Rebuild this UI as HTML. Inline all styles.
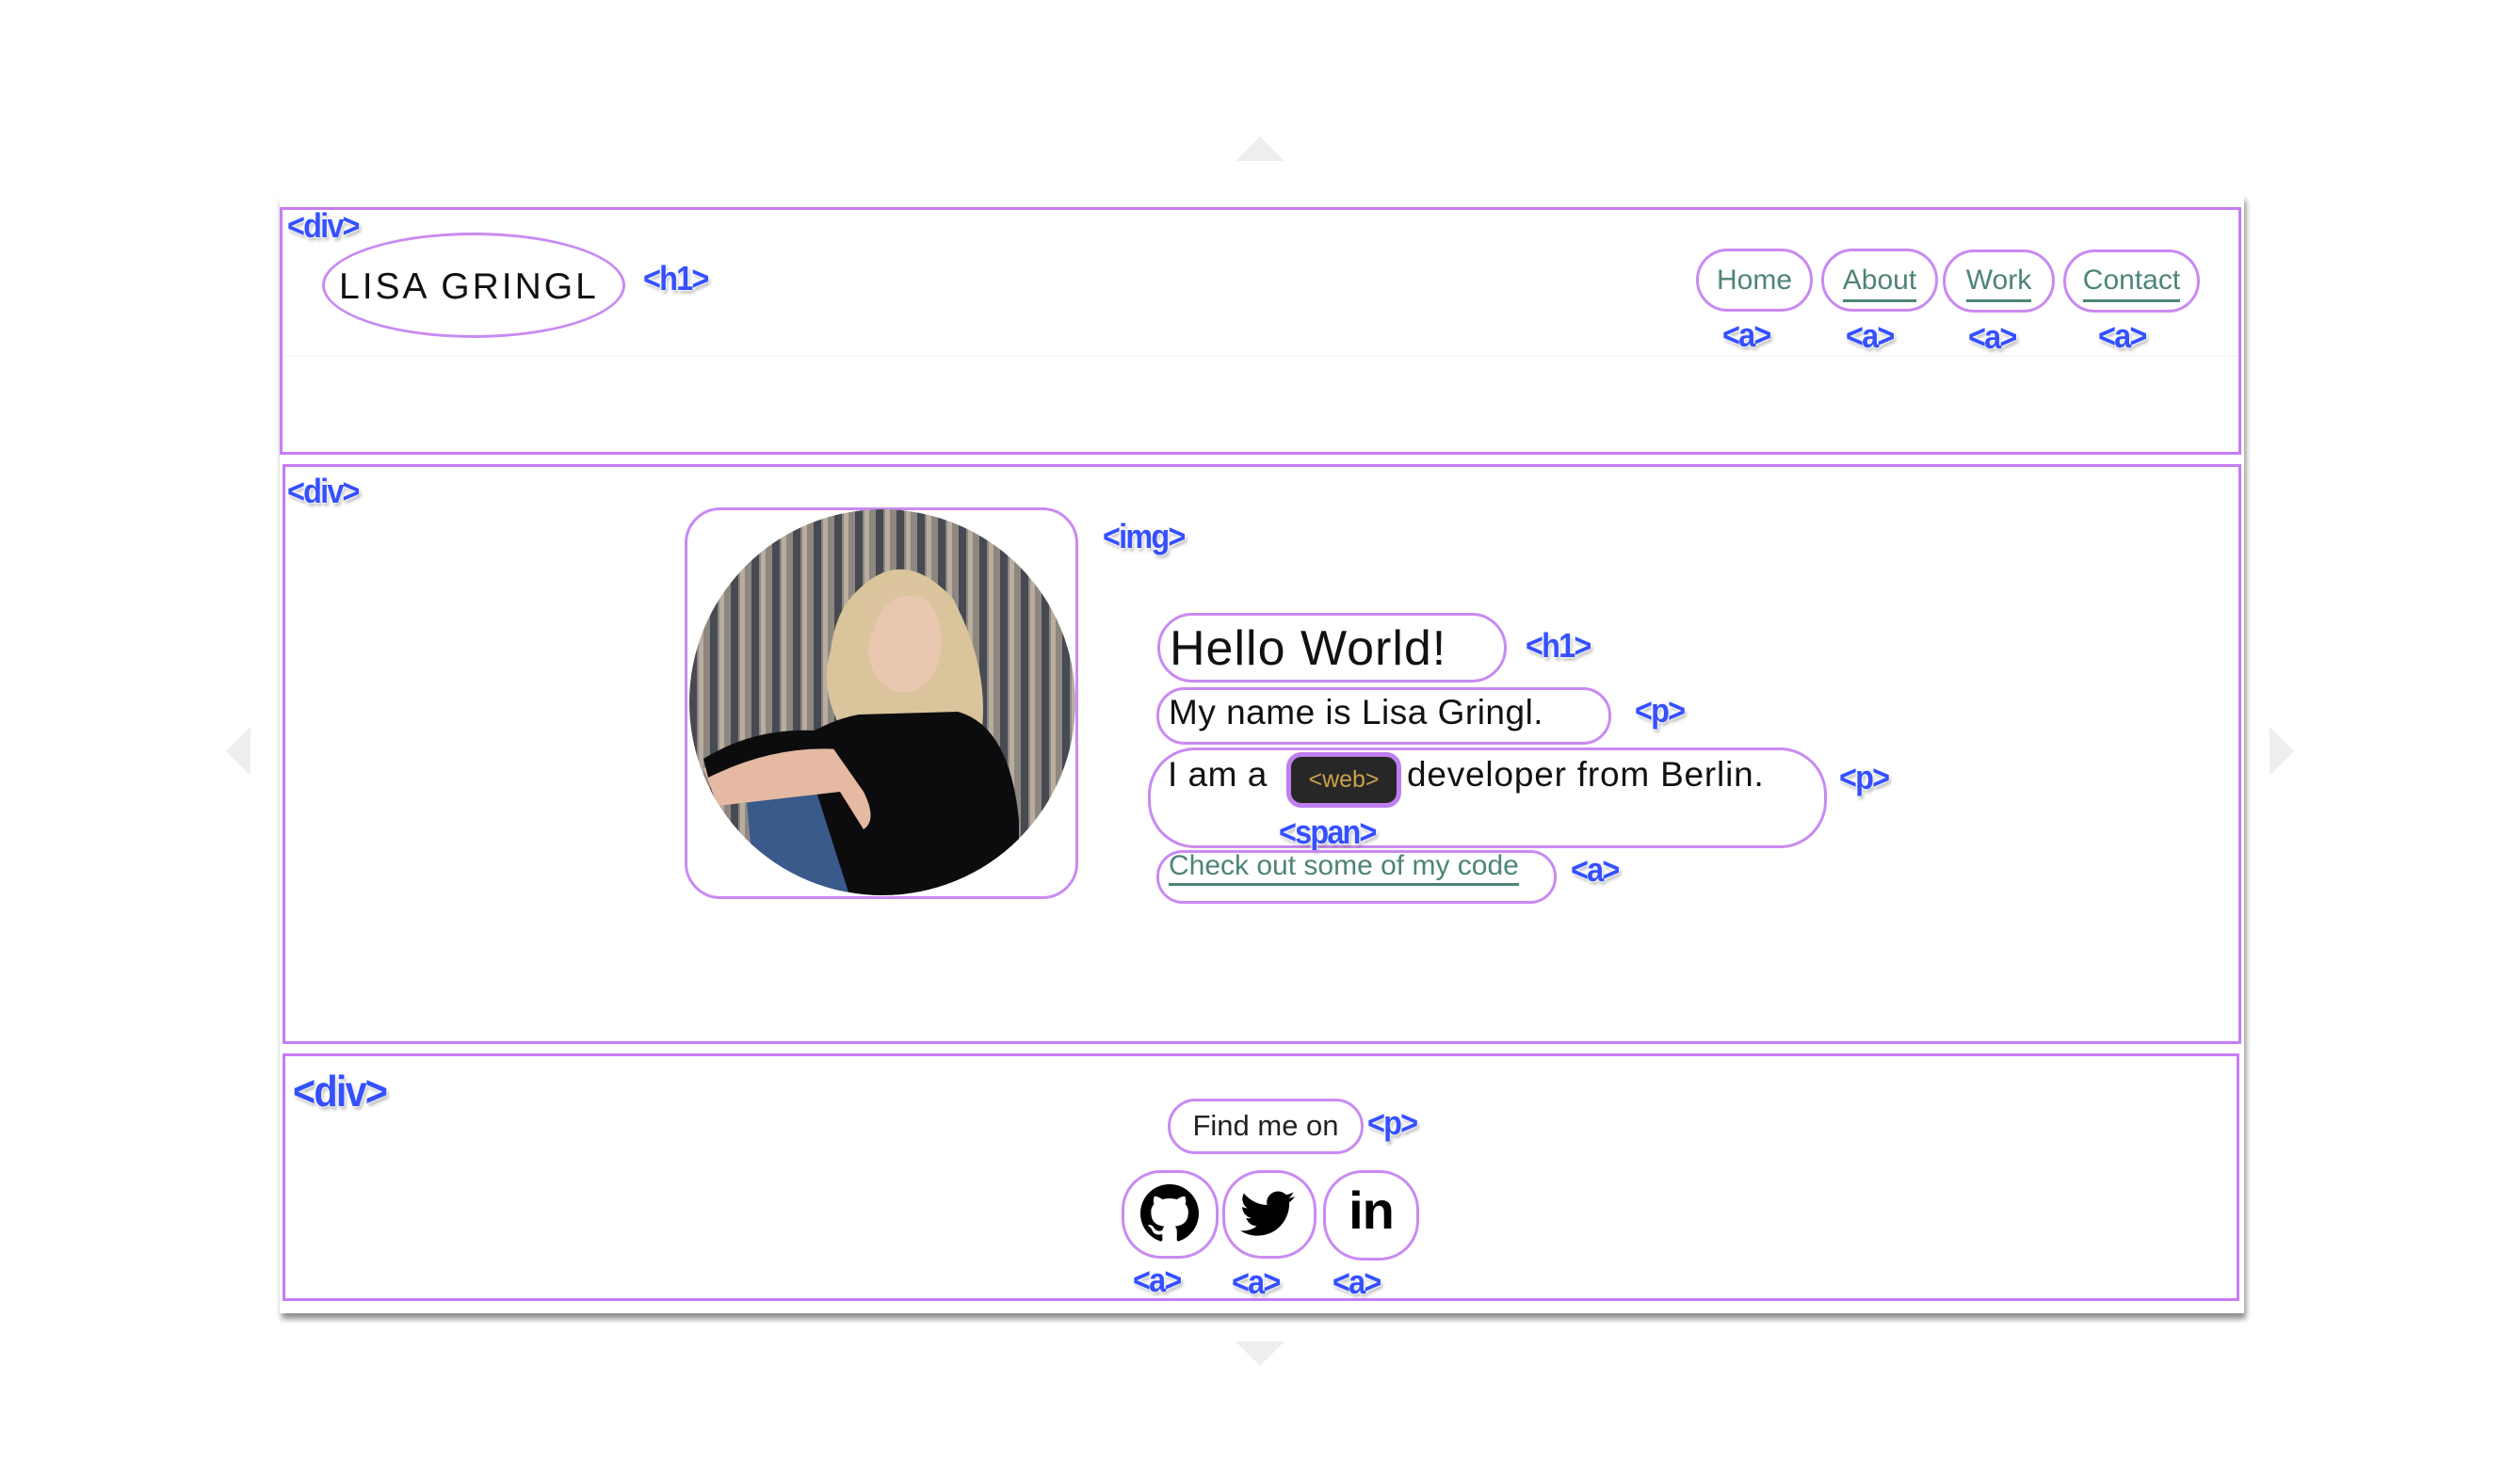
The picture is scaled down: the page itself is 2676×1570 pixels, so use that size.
<!DOCTYPE html>
<html><head><meta charset="utf-8"><style>
*{margin:0;padding:0;box-sizing:border-box}
body{width:2676px;height:1570px;background:#fff;position:relative;overflow:hidden;font-family:"Liberation Sans",sans-serif}
.a{position:absolute}
.bx{position:absolute;border:3px solid #c77cf5}
.pill{position:absolute;border:3px solid #c98af2;border-radius:999px}
.lbl{position:absolute;color:#3450ff;font-weight:bold;font-size:36px;line-height:1;text-shadow:0 0 3px #fff,0 0 3px #fff,0 0 4px #fff,2px 3px 4px rgba(0,0,0,.35);letter-spacing:-2px;transform:scaleX(.9);transform-origin:left}
.nav{position:absolute;color:#4d8478;font-size:30px;text-align:center;line-height:1}
.ul{border-bottom:3px solid #4d8478;padding-bottom:4px}
.tri{position:absolute;width:0;height:0}
</style></head><body>
<div class="tri" style="left:1312px;top:145px;border-left:26px solid transparent;border-right:26px solid transparent;border-bottom:26px solid #eee"></div>
<div class="tri" style="left:1312px;top:1425px;border-left:26px solid transparent;border-right:26px solid transparent;border-top:26px solid #eee"></div>
<div class="tri" style="left:240px;top:772px;border-top:26px solid transparent;border-bottom:26px solid transparent;border-right:26px solid #eee"></div>
<div class="tri" style="left:2410px;top:772px;border-top:26px solid transparent;border-bottom:26px solid transparent;border-left:26px solid #eee"></div>
<div class="a" style="left:297px;top:207px;width:2086px;height:1188px;background:#fff;box-shadow:2px 6px 6px rgba(0,0,0,.45)"></div>
<div class="bx" style="left:297px;top:220px;width:2083px;height:263px"></div>
<div class="a" style="left:300px;top:377px;width:2077px;height:2px;background:#f6f6f6"></div>
<div class="lbl" style="left:305px;top:222px">&lt;div&gt;</div>
<div class="a" style="left:342px;top:247px;width:322px;height:112px;border:3px solid #c98af2;border-radius:50%"></div>
<div class="a" style="left:360px;top:283px;font-size:39px;letter-spacing:3px;color:#111">LISA GRINGL</div>
<div class="lbl" style="left:683px;top:278px">&lt;h1&gt;</div>
<div class="pill" style="left:1801px;top:264px;width:124px;height:67px"></div>
<div class="nav" style="left:1801px;top:283px;width:124px">Home</div>
<div class="pill" style="left:1934px;top:264px;width:124px;height:67px"></div>
<div class="nav" style="left:1934px;top:283px;width:124px"><span class="ul">About</span></div>
<div class="pill" style="left:2063px;top:265px;width:119px;height:67px"></div>
<div class="nav" style="left:2063px;top:283px;width:119px"><span class="ul">Work</span></div>
<div class="pill" style="left:2191px;top:265px;width:145px;height:67px"></div>
<div class="nav" style="left:2191px;top:283px;width:145px"><span class="ul">Contact</span></div>
<div class="lbl" style="left:1829px;top:338px">&lt;a&gt;</div>
<div class="lbl" style="left:1960px;top:339px">&lt;a&gt;</div>
<div class="lbl" style="left:2090px;top:340px">&lt;a&gt;</div>
<div class="lbl" style="left:2228px;top:339px">&lt;a&gt;</div>
<div class="bx" style="left:300px;top:493px;width:2080px;height:616px"></div>
<div class="lbl" style="left:305px;top:504px">&lt;div&gt;</div>
<div class="a" style="left:727px;top:539px;width:418px;height:416px;border:3px solid #c98af2;border-radius:38px"></div>
<svg class="a" style="left:732px;top:541px" width="410" height="410" viewBox="0 0 410 410">
<defs><clipPath id="c"><circle cx="205" cy="205" r="205"/></clipPath>
<pattern id="s" width="22" height="10" patternUnits="userSpaceOnUse"><rect width="22" height="10" fill="#8d8780"/><rect x="0" width="8" height="10" fill="#474a52"/><rect x="10" width="5" height="10" fill="#b8ad9f"/></pattern></defs>
<g clip-path="url(#c)">
<rect width="410" height="410" fill="url(#s)"/>
<path d="M175 90 Q225 35 280 95 Q320 170 310 240 Q290 265 250 260 L175 255 Q135 200 150 150 Q155 110 175 90Z" fill="#d9c49c"/>
<path d="M95 260 Q140 225 180 218 L285 215 Q340 230 350 330 L350 410 L100 410Z" fill="#0c0c0e"/>
<ellipse cx="228" cy="140" rx="40" ry="55" fill="#eac7b0"/>
<path d="M180 120 Q195 70 240 72 Q275 80 275 120 Q255 90 230 92 Q200 95 190 150Z" fill="#dcc59e"/>
<path d="M60 300 Q110 270 135 300 L170 410 L70 410Z" fill="#3a5a8c"/>
<path d="M15 275 Q90 245 150 250 L185 300 Q200 330 185 340 L160 300 L30 315Z" fill="#e5b9a2"/>
<path d="M15 265 Q80 225 160 238 L160 255 Q90 250 20 285Z" fill="#0c0c0e"/>
</g></svg>
<div class="lbl" style="left:1171px;top:552px">&lt;img&gt;</div>
<div class="pill" style="left:1229px;top:651px;width:371px;height:74px;border-radius:37px"></div>
<div class="a" style="left:1242px;top:659px;font-size:52px;letter-spacing:1px;color:#111">Hello World!</div>
<div class="lbl" style="left:1620px;top:668px">&lt;h1&gt;</div>
<div class="pill" style="left:1228px;top:730px;width:483px;height:61px;border-radius:30px"></div>
<div class="a" style="left:1241px;top:736px;font-size:37px;letter-spacing:.5px;color:#111">My name is Lisa Gringl.</div>
<div class="lbl" style="left:1736px;top:737px">&lt;p&gt;</div>
<div class="a" style="left:1219px;top:794px;width:721px;height:107px;border:3px solid #c98af2;border-radius:50px"></div>
<div class="a" style="left:1240px;top:802px;font-size:37px;letter-spacing:.5px;color:#111">I am a</div>
<div class="a" style="left:1366px;top:799px;width:122px;height:59px;border:5px solid #c07ef0;border-radius:16px;background:#272727;color:#c9a24a;font-size:25px;text-align:center;line-height:48px">&lt;web&gt;</div>
<div class="a" style="left:1494px;top:802px;font-size:37px;letter-spacing:.8px;color:#111">developer from Berlin.</div>
<div class="lbl" style="left:1953px;top:808px">&lt;p&gt;</div>
<div class="lbl" style="left:1358px;top:866px">&lt;span&gt;</div>
<div class="pill" style="left:1228px;top:903px;width:425px;height:57px;border-radius:28px"></div>
<div class="a" style="left:1241px;top:903px;font-size:30px;color:#4d8478"><span class="ul" style="padding-bottom:2px">Check out some of my code</span></div>
<div class="lbl" style="left:1668px;top:906px">&lt;a&gt;</div>
<div class="bx" style="left:300px;top:1119px;width:2078px;height:263px"></div>
<div class="lbl" style="left:311px;top:1136px;font-size:46px">&lt;div&gt;</div>
<div class="pill" style="left:1240px;top:1167px;width:208px;height:59px"></div>
<div class="a" style="left:1240px;top:1178px;width:208px;text-align:center;font-size:31px;color:#222">Find me on</div>
<div class="lbl" style="left:1452px;top:1175px">&lt;p&gt;</div>
<div class="a" style="left:1191px;top:1243px;width:103px;height:94px;border:3px solid #c98af2;border-radius:42px"></div>
<div class="a" style="left:1298px;top:1243px;width:100px;height:94px;border:3px solid #c98af2;border-radius:42px"></div>
<div class="a" style="left:1405px;top:1243px;width:102px;height:96px;border:3px solid #c98af2;border-radius:42px"></div>
<svg class="a" style="left:1211px;top:1258px" width="62" height="62" viewBox="0 0 16 16"><path fill="#000" d="M8 0C3.58 0 0 3.58 0 8c0 3.54 2.29 6.530 5.47 7.59.4.07.55-.17.55-.38 0-.19-.01-.82-.01-1.49-2.01.37-2.53-.49-2.69-.94-.09-.23-.48-.94-.82-1.13-.28-.15-.68-.52-.01-.53.63-.01 1.08.58 1.23.82.72 1.21 1.87.87 2.33.66.07-.52.28-.87.51-1.07-1.78-.2-3.640-.89-3.64-3.95 0-.87.31-1.59.82-2.15-.08-.2-.36-1.02.08-2.12 0 0 .67-.21 2.2.82.64-.18 1.32-.27 2-.27.68 0 1.36.09 2 .27 1.53-1.04 2.2-.82 2.2-.82.44 1.1.16 1.92.08 2.12.51.56.82 1.27.82 2.15 0 3.07-1.87 3.75-3.65 3.95.29.25.54.73.54 1.48 0 1.07-.01 1.93-.01 2.2 0 .21.15.46.55.38A8.013 8.013 0 0016 8c0-4.42-3.58-8-8-8z"/></svg>
<svg class="a" style="left:1316px;top:1260px" width="60" height="58" viewBox="0 0 24 24"><path fill="#000" d="M23.95 4.57a10 10 0 01-2.82.77 4.96 4.96 0 002.16-2.720c-.95.56-2 .96-3.12 1.19a4.92 4.92 0 00-8.38 4.48A13.94 13.94 0 011.64 3.16a4.92 4.92 0 001.52 6.57 4.9 4.9 0 01-2.23-.61v.06a4.92 4.92 0 003.95 4.83 4.96 4.96 0 01-2.21.08 4.93 4.93 0 004.6 3.42A9.870 9.870 0 010 19.54a13.94 13.94 0 007.55 2.21c9.06 0 14-7.5 14-13.99 0-.21 0-.42-.02-.63A9.94 9.94 0 0024 4.59z"/></svg>
<div class="a" style="left:1405px;top:1253px;width:102px;text-align:center;font-size:56px;font-weight:bold;color:#000;letter-spacing:-1px">in</div>
<div class="lbl" style="left:1203px;top:1342px">&lt;a&gt;</div>
<div class="lbl" style="left:1308px;top:1344px">&lt;a&gt;</div>
<div class="lbl" style="left:1415px;top:1344px">&lt;a&gt;</div>
</body></html>
